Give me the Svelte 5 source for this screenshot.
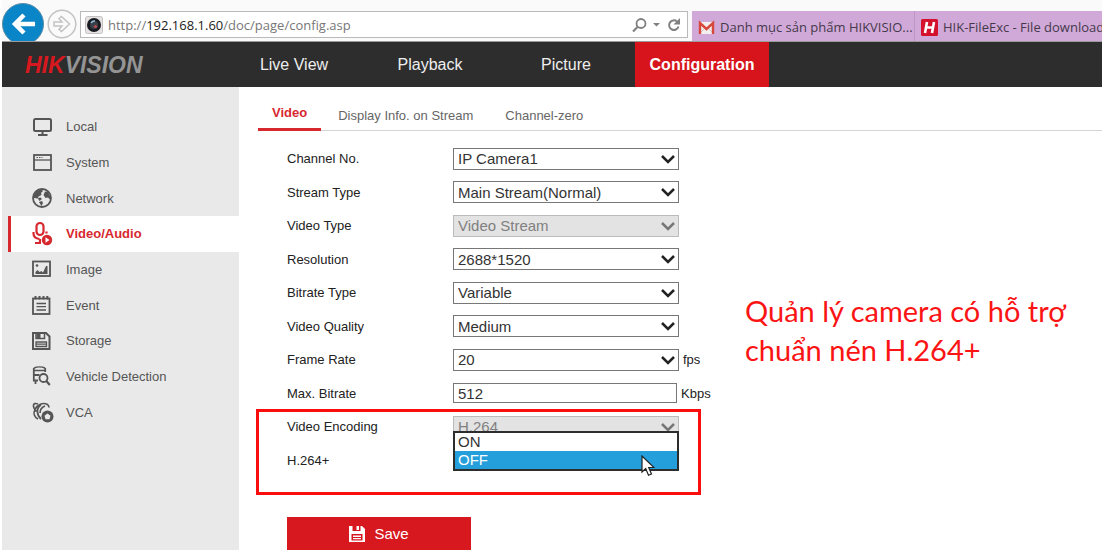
<script lang="ts">
	interface Field {
		id: string;
		label: string;
		value: string;
		kind?: 'select' | 'input';
		disabled?: boolean;
		unit?: string;
	}

	const bookmarks = [
		{ icon: 'gmail', text: 'Danh mục sản phẩm HIKVISIO...' },
		{ icon: 'hik', text: 'HIK-FileExc - File download' }
	];

	const navItems = ['Live View', 'Playback', 'Picture', 'Configuration'];
	const menuItems = [
		'Local',
		'System',
		'Network',
		'Video/Audio',
		'Image',
		'Event',
		'Storage',
		'Vehicle Detection',
		'VCA'
	];
	const tabs = ['Video', 'Display Info. on Stream', 'Channel-zero'];

	const fields: Field[] = [
		{ id: 'channel', label: 'Channel No.', value: 'IP Camera1' },
		{ id: 'stream', label: 'Stream Type', value: 'Main Stream(Normal)' },
		{ id: 'type', label: 'Video Type', value: 'Video Stream', disabled: true },
		{ id: 'resolution', label: 'Resolution', value: '2688*1520' },
		{ id: 'bitrate-type', label: 'Bitrate Type', value: 'Variable' },
		{ id: 'quality', label: 'Video Quality', value: 'Medium' },
		{ id: 'fps', label: 'Frame Rate', value: '20', unit: 'fps' },
		{ id: 'bitrate', label: 'Max. Bitrate', value: '512', kind: 'input', unit: 'Kbps' },
		{ id: 'encoding', label: 'Video Encoding', value: 'H.264', disabled: true }
	];

	let activeNav = $state('Configuration');
	let activeMenu = $state('Video/Audio');
	let activeTab = $state('Video');
	let plus = $state('OFF');
	let plusOpen = $state(true);

	function pick(option: string) {
		plus = option;
		plusOpen = false;
	}
</script>

{#snippet menuIcon(name: string)}
	<svg class="menu-icon" viewBox="0 0 20 20" fill="none" stroke="currentColor" stroke-width="2" aria-hidden="true">
		{#if name === 'Local'}
			<rect x="2" y="2" width="17" height="12" rx="1.5" />
			<path d="M10.500 14v4M6 18h9.500" />
		{:else if name === 'System'}
			<rect x="2" y="3" width="17" height="15" stroke-width="1.800" />
			<path d="M2 8h17" stroke-width="1.300" />
			<path d="M4.500 5.500h6" stroke-width="1" stroke-dasharray="1.500 1" />
		{:else if name === 'Network'}
			<circle cx="10" cy="10" r="9" stroke-width="1.800" />
			<path
				d="M2 7c1-3 4-5.500 7.500-5.500L11 3 9 5l.5 2-3 1.500-.5 1.500 2.500-.5L10 11l-2.500 2-1.500-2.500L2 10ZM13 3.500l3 .5 2.500 5v3L16 9.500l-2.500.5-2-3ZM7 14l3-1 1 2-1.500 3Z"
				fill="currentColor"
				stroke="none"
			/>
		{:else if name === 'Video/Audio'}
			<rect x="4.500" y="-1" width="7" height="12" rx="3.500" stroke-width="2.200" />
			<path d="M1.500 8v1.500c0 3 2 5 6 5.500M8 15v3M3 19h6M14.500 7.500v2" stroke-width="2.200" />
			<circle cx="15" cy="16" r="5.200" fill="currentColor" stroke="none" />
			<path d="M13.500 13.300v5.400l4-2.700Z" fill="#fff" stroke="none" />
		{:else if name === 'Image'}
			<rect x="1" y="2.500" width="17" height="14.500" stroke-width="1.800" />
			<path d="M3.500 15v-2l2-2 2 2 2-1 1.500 1.500 3-6.500h1.500v8Z" fill="currentColor" stroke="none" />
			<circle cx="5" cy="6.500" r="1.300" fill="currentColor" stroke="none" />
		{:else if name === 'Event'}
			<rect x="1" y="3.500" width="16.500" height="15.500" stroke-width="1.800" />
			<path d="M3.500 1v3.500M7.500 1v3.500M11.500 1v3.500M15.300 1v3.500" stroke-width="2" />
			<path d="M4.500 8.500h9.500M4.500 11.700h9.500M4.500 15h9.500" stroke-width="1.300" />
		{:else if name === 'Storage'}
			<path d="M1 2h13l3.500 3.500V18H1Z" />
			<path d="M4 2v5.500h8.500V2" stroke-width="1.500" />
			<path d="M4.500 2.500h4v4.500h-4Z" fill="currentColor" stroke="none" />
			<path d="M4 11h10.500v4.500H4ZM4 13.200h10.500" stroke-width="1.300" />
		{:else if name === 'Vehicle Detection'}
			<path d="M2 2c3-1.500 8-1.500 11 0M2 4.500h11" stroke-width="1.500" />
			<path d="M1.800 2v13M13.200 2v4M2 9h5.500M1 14.500h5M3.500 14v4" stroke-width="1.800" />
			<circle cx="11.500" cy="12" r="4" stroke-width="1.800" />
			<path d="m14.300 15 3.500 4" stroke-width="2.200" />
		{:else}
			<path
				d="M4.500 9.500C0 4.500.5 0 6 2M3 7.500C5 2.500 11 0 15.500 2.500c1 1 1.500 2 1.500 3M9 3C4 6 4.500 13 9 17M13 4C9 5.500 8 7.500 8 11M3 8c-2 3-1 7 3 9"
				stroke-width="1.700"
			/>
			<circle cx="15.500" cy="14.500" r="6" fill="currentColor" stroke="none" />
			<path d="m15.500 11.500 3 2.200-1 3.500h-4l-1-3.500Z" fill="#e9e9e9" stroke="none" />
		{/if}
	</svg>
{/snippet}

<div class="page">
	<header class="browser">
		<button class="back" aria-label="Back">
			<svg viewBox="0 0 42 42" aria-hidden="true">
				<circle cx="21" cy="21" r="20.500" fill="#0a85c7" stroke="#5d8ba6" />
				<path d="M33 21H13M22 12l-9 9 9 9" fill="none" stroke="#fff" stroke-width="4.500" />
			</svg>
		</button>
		<button class="forward" aria-label="Forward">
			<svg viewBox="0 0 30 30" fill="none" stroke="#c3c3c3" stroke-width="1.500" aria-hidden="true">
				<circle cx="15" cy="15" r="13.800" />
				<path d="M7 13h8l-3-3.500 2.500-2L22.500 15l-8 7.500-2.500-2 3-3.500H7Z" />
			</svg>
		</button>
		<div class="address">
			<svg class="favicon" viewBox="0 0 18 18" aria-hidden="true">
				<rect x=".5" y=".5" width="17" height="17" rx="2" fill="#e4e2e2" stroke="#c4c0c0" />
				<circle cx="9" cy="9" r="7" fill="#191b20" />
				<circle cx="9" cy="9" r="4" fill="#39404c" />
				<path d="M6 7a4 4 0 0 1 4-2" stroke="#8fc0dc" stroke-width="1.500" fill="none" />
				<circle cx="10.500" cy="10.500" r="1.600" fill="#b84a4c" />
			</svg>
			<span class="url">http://<b>192.168.1.60</b>/doc/page/config.asp</span>
			<button class="tool" aria-label="Search">
				<svg width="52" height="18" viewBox="0 0 52 18" fill="none" stroke="#808080" stroke-width="1.800" aria-hidden="true">
					<circle cx="10" cy="7.500" r="4.500" />
					<path d="m6.500 11-4.500 4.500" stroke-width="2.200" />
					<path d="M22 7h7l-3.500 3.500Z" fill="#808080" stroke="none" />
					<path d="M46 5.500a4.800 4.800 0 1 0 1.500 5" stroke-width="2" />
					<path d="M49 2v6.500h-6.500Z" fill="#808080" stroke="none" />
				</svg>
			</button>
		</div>
		<nav class="bookmarks" aria-label="Favorites">
			{#each bookmarks as mark}
				<a href="#{mark.icon}">
					<svg class="mark-icon" viewBox="0 0 17 17" aria-hidden="true">
						{#if mark.icon === 'gmail'}
							<path d="M1 3h15v12H1Z" fill="#f2efee" />
							<path d="m1 15 6-6M16 15l-6-6" stroke="#d0c3c3" />
							<path d="M2 15V4l6.500 6L15 4v11" fill="none" stroke="#d8473c" stroke-width="2.400" />
						{:else}
							<rect width="17" height="17" rx="1.500" fill="#d5102c" />
							<path d="M6 3 4 14M13 3l-2 11M5 8.500h7" stroke="#fff" stroke-width="2.600" />
						{/if}
					</svg>
					{mark.text}
				</a>
			{/each}
		</nav>
	</header>

	<div class="topbar">
		<a class="logo" href="#home"><span>HIK</span>VISION</a>
		<nav class="nav">
			{#each navItems as item}
				<a href="#{item}" class:active={item === activeNav} onclick={() => (activeNav = item)}>{item}</a>
			{/each}
		</nav>
	</div>

	<div class="body">
		<aside class="sidebar">
			<ul>
				{#each menuItems as item}
					<li>
						<a href="#{item}" class:active={item === activeMenu} onclick={() => (activeMenu = item)}>
							{@render menuIcon(item)}
							{item}
						</a>
					</li>
				{/each}
			</ul>
		</aside>

		<main>
			<nav class="tabs">
				{#each tabs as tab}
					<a href="#{tab}" class:active={tab === activeTab} onclick={() => (activeTab = tab)}>{tab}</a>
				{/each}
			</nav>

			<div class="content">
				<form>
					<div class="fields">
						{#each fields as field}
							<div class="field">
								<label for={field.id}>{field.label}</label>
								{#if field.kind === 'input'}
									<input id={field.id} type="text" value={field.value} />
								{:else}
									<div class="select">
										<select id={field.id} disabled={field.disabled}>
											<option>{field.value}</option>
										</select>
										<svg class="chevron" viewBox="0 0 14 9" aria-hidden="true"><path d="m1 1 6 6 6-6" /></svg>
									</div>
								{/if}
								{#if field.unit}
									<span class="unit">{field.unit}</span>
								{/if}
							</div>
						{/each}
						<div class="field">
							<label for="plus">H.264+</label>
							<div class="select">
								<select id="plus" bind:value={plus}>
									<option>ON</option>
									<option>OFF</option>
								</select>
								<svg class="chevron" viewBox="0 0 14 9" aria-hidden="true"><path d="m1 1 6 6 6-6" /></svg>
								{#if plusOpen}
									<div class="popup">
										{#each ['ON', 'OFF'] as option}
											<button type="button" class:picked={option === plus} onclick={() => pick(option)}>{option}</button>
										{/each}
										<svg class="pointer" viewBox="0 0 14 22" aria-hidden="true">
											<path d="M1 1v16l3.700-3.500 2.800 6.800 3-1.300-2.800-6.500H13Z" fill="#fff" stroke="#222" stroke-width="1.200" />
										</svg>
									</div>
								{/if}
							</div>
						</div>
						<div class="highlight"></div>
					</div>
					<button type="button" class="save">
						<svg viewBox="0 0 16 16" aria-hidden="true">
							<path d="M0 0h13l3 3v13H0Z" fill="#fff" />
							<path d="M3.500 0v5h8V0ZM2.500 8h11v6.500h-11Z" fill="#d7191f" />
							<path d="M7.500 0h2.500v4H7.500ZM4 9.500h8V11H4ZM4 12h8v1.300H4Z" fill="#fff" />
						</svg>
						Save
					</button>
				</form>
				<p class="note">Quản lý camera có hỗ trợ<br />chuẩn nén H.264+</p>
			</div>
		</main>
	</div>
</div>

<style>
	:global(body) {
		margin: 0;
		background: #fff;
	}

	.page {
		display: flex;
		flex-direction: column;
		min-height: 100vh;
		padding-left: 2px;
		box-sizing: border-box;
		overflow: hidden;
		font-family: 'Liberation Sans', Arial, sans-serif;
		font-size: 13px;
		color: #222;
	}

	a {
		color: inherit;
		text-decoration: none;
	}

	button {
		padding: 0;
		border: 0;
		background: none;
		font: inherit;
		color: inherit;
		cursor: pointer;
	}

	/* Browser chrome */
	.browser {
		display: flex;
		align-items: flex-start;
		height: 42px;
		box-sizing: border-box;
		border-bottom: 1px solid #9b9b9b;
		background: #fafafa;
		font-family: 'Open Sans', 'Segoe UI', sans-serif;
		overflow: hidden;
	}

	.back {
		flex: none;
		width: 42px;
		height: 42px;
		margin-top: 3px;
	}

	.forward {
		flex: none;
		width: 30px;
		height: 30px;
		margin: 9px 3px 0;
	}

	.back svg,
	.forward svg {
		display: block;
	}

	.address {
		flex: 1;
		display: flex;
		align-items: center;
		gap: 5px;
		min-width: 0;
		height: 27px;
		margin: 11px 4px 0 0;
		padding: 0 4px;
		box-sizing: border-box;
		border: 1px solid #b9b9b9;
		background: #fff;
	}

	.favicon {
		flex: none;
		width: 18px;
		height: 18px;
	}

	.url {
		flex: 1;
		color: #777;
		font-size: 13px;
		white-space: nowrap;
	}

	.url b {
		color: #222;
		font-weight: 400;
	}

	.tool svg {
		display: block;
	}

	.bookmarks {
		flex: 0 0 410px;
		display: flex;
		height: 30px;
		margin-top: 11px;
		background: #d1a9d9;
		overflow: hidden;
	}

	.bookmarks a {
		flex: none;
		display: flex;
		align-items: center;
		gap: 5px;
		width: 223px;
		padding: 2px 0 0 6px;
		box-sizing: border-box;
		border-right: 1px solid #bb98c3;
		color: #443a4a;
		font-size: 13px;
		white-space: nowrap;
	}

	.mark-icon {
		flex: none;
		width: 17px;
		height: 17px;
	}

	/* Site header */
	.topbar {
		display: flex;
		height: 45px;
		background: #2d2d2d;
	}

	.logo {
		width: 202px;
		padding-left: 23px;
		color: #949494;
		font-size: 23px;
		font-style: italic;
		font-weight: 700;
		line-height: 46px;
	}

	.logo span {
		color: #d7191f;
	}

	.nav {
		display: flex;
		gap: 2px;
	}

	.nav a {
		width: 134px;
		color: #eee;
		font-size: 16px;
		line-height: 46px;
		text-align: center;
	}

	.nav a.active {
		background: #d7141b;
		color: #fff;
		font-weight: 700;
	}

	.body {
		flex: 1;
		display: flex;
	}

	/* Sidebar */
	.sidebar {
		flex: none;
		width: 237px;
		background: #e9e9e9;
	}

	.sidebar ul {
		display: grid;
		grid-template-rows: repeat(9, 1fr);
		height: 321px;
		margin: 22px 0 0;
		padding: 0 0 0 6px;
		list-style: none;
	}

	.sidebar a {
		display: flex;
		align-items: center;
		gap: 14px;
		height: 100%;
		padding-left: 21px;
		box-sizing: border-box;
		border-left: 3px solid transparent;
		color: #555;
	}

	.sidebar a.active {
		border-color: #d7282f;
		background: #fff;
		color: #d7282f;
		font-weight: 700;
	}

	.menu-icon {
		width: 20px;
		height: 20px;
		overflow: visible;
	}

	/* Main area */
	main {
		flex: 1;
		min-width: 0;
	}

	.tabs {
		display: flex;
		gap: 32px;
		height: 43px;
		margin-left: 19px;
		border-bottom: 1px solid #d5d5d5;
		color: #666;
		line-height: 58px;
	}

	.tabs a.active {
		height: 41px;
		margin-right: -15px;
		padding: 0 14px;
		border-bottom: 3px solid #d7282f;
		color: #d7282f;
		line-height: 52px;
		font-weight: 700;
	}

	.content {
		display: flex;
		align-items: flex-start;
		margin: 11px 0 0 48px;
	}

	form {
		flex: 0 0 458px;
	}

	.fields {
		position: relative;
		display: grid;
		grid-template-rows: repeat(10, 1fr);
		height: 335px;
	}

	.field {
		display: flex;
		align-items: center;
	}

	label {
		width: 166px;
	}

	.select {
		position: relative;
		width: 226px;
	}

	select,
	input {
		display: block;
		width: 100%;
		height: 22px;
		padding: 0 4px;
		box-sizing: border-box;
		border: 1px solid #777;
		border-radius: 0;
		appearance: none;
		background: #fff;
		color: #333;
		font-family: inherit;
		font-size: 15px;
	}

	input {
		width: 224px;
		height: 20px;
	}

	select:disabled {
		border-color: #bbb;
		background: #e3e3e3;
		color: #808080;
		opacity: 1;
	}

	.chevron {
		position: absolute;
		top: 7px;
		right: 4px;
		width: 14px;
		height: 9px;
		fill: none;
		stroke: #222;
		stroke-width: 2.5;
		pointer-events: none;
	}

	select:disabled + .chevron {
		stroke: #777;
	}

	.unit {
		margin-left: 4px;
	}

	.popup {
		position: absolute;
		left: 0;
		right: 0;
		bottom: 0;
		border: 2px solid #2d2d2d;
		background: #fff;
	}

	.popup button {
		display: block;
		width: 100%;
		height: 18px;
		padding-left: 3px;
		color: #333;
		font-size: 15px;
		line-height: 18px;
		text-align: left;
	}

	.popup button.picked {
		background: #259fdb;
		color: #fff;
	}

	.pointer {
		position: absolute;
		right: 22px;
		bottom: -8px;
		width: 14px;
		height: 22px;
	}

	/* Frame around the encoding rows */
	.highlight {
		position: absolute;
		left: -31px;
		top: 267px;
		width: 445px;
		height: 86px;
		box-sizing: border-box;
		border: 3px solid #fb0d0d;
		pointer-events: none;
	}

	.save {
		display: flex;
		align-items: center;
		justify-content: center;
		gap: 9px;
		width: 184px;
		height: 33px;
		margin-top: 40px;
		background: #d7191f;
		color: #fff;
		font-size: 15px;
	}

	.save svg {
		width: 16px;
		height: 16px;
	}

	.note {
		margin: 149px 0 0;
		color: #fb1414;
		font-family: Lato, Calibri, sans-serif;
		font-size: 29px;
		line-height: 39px;
		white-space: nowrap;
	}
</style>
